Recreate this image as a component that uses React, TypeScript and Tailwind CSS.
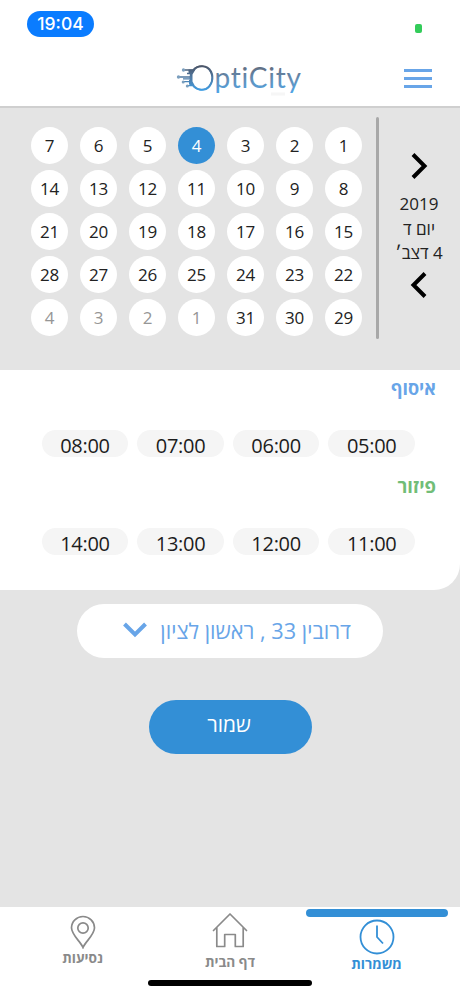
import clsx from "clsx";

interface Day {
  label: number;
  muted?: boolean;
  selected?: boolean;
}

const days: Day[] = [
  ...Array.from({ length: 31 }, (_, i) => ({
    label: i + 1,
    selected: i + 1 === 4,
  })),
  ...[1, 2, 3, 4].map((label) => ({ label, muted: true })),
];

const pickupTimes = ["05:00", "06:00", "07:00", "08:00"];
const dropTimes = ["11:00", "12:00", "13:00", "14:00"];

function Logo() {
  return (
    <svg width="130" height="40" viewBox="0 0 130 40" direction="ltr">
      <defs>
        <linearGradient
          id="ring"
          gradientUnits="userSpaceOnUse"
          x1="0"
          y1="7"
          x2="0"
          y2="33"
        >
          <stop offset="0" stopColor="#4b5263" />
          <stop offset="0.5" stopColor="#4f7ba6" />
          <stop offset="1" stopColor="#3f9fe6" />
        </linearGradient>
        <linearGradient
          id="word"
          gradientUnits="userSpaceOnUse"
          x1="0"
          y1="8"
          x2="0"
          y2="36"
        >
          <stop offset="0" stopColor="#606b7d" />
          <stop offset="0.5" stopColor="#6490b9" />
          <stop offset="1" stopColor="#4ba6ea" />
        </linearGradient>
      </defs>
      <g fill="none" stroke="url(#ring)">
        <ellipse cx="25.200" cy="20" rx="11" ry="11.800" strokeWidth="1.200" />
        <path
          d="M17.500 12C22 7 31 6.500 35 13.500C38 20 36 28 30 31C26 32.500 21 31.500 18 28.500"
          strokeWidth="2"
        />
        <path
          d="M8.500 12H18M3 19H15M8 23.700H15M12 27.700H18M11 15.500H16M7 20.800H15"
          strokeWidth="1.300"
        />
      </g>
      <path
        d="M12.500 11.500H19.500L16.500 16.500V23.500L19.500 29L13 26.500L13 22H14.500V17.500L12.500 14.500Z"
        fill="url(#ring)"
      />
      <g fill="#7b9fbe">
        <circle cx="7.500" cy="12" r="1.700" />
        <circle cx="2.500" cy="19" r="1.700" />
        <circle cx="7.200" cy="23.900" r="1.500" />
        <circle cx="11.300" cy="27.900" r="1.500" />
      </g>
      <text
        x="38.500"
        y="30"
        fontSize="28"
        textLength="86.500"
        fill="url(#word)"
        className="font-['Lato',sans-serif] [font-variant-ligatures:none]"
      >
        ptiCity
      </text>
      <rect x="95" y="34.500" width="14" height="3" fill="#f6f6f6" />
    </svg>
  );
}

function Chevron({ className }: { className?: string }) {
  return (
    <svg
      width="18"
      height="28"
      viewBox="0 0 18 28"
      fill="none"
      stroke="currentColor"
      strokeWidth="4"
      className={className}
    >
      <path d="M3 2.500L14.500 14L3 25.500" />
    </svg>
  );
}

function Header() {
  return (
    <header className="h-[108px] bg-white border-b-2 border-[#cfcfcf]">
      <div className="flex justify-between items-start pt-[11px] pl-[27px] pr-[38px]">
        <span className="w-[67px] h-[26px] rounded-full bg-[#0a7cff] text-white text-[17.5px] leading-[26px] font-medium text-center font-['Inter',sans-serif]">
          19:04
        </span>
        <span className="mt-[13px] w-[7px] h-[9px] rounded-[2px] bg-[#33cc5a]" />
      </div>
      <div className="flex items-center pl-[176px] pr-[28px] mt-[21px] justify-between">
        <Logo />
        <div className="w-7 flex flex-col gap-[5px]">
          <span className="h-[3px] bg-[#68a5e8]" />
          <span className="h-[3px] bg-[#68a5e8]" />
          <span className="h-[3px] bg-[#68a5e8]" />
        </div>
      </div>
    </header>
  );
}

function Calendar() {
  return (
    <section dir="rtl" className="h-[262px] pt-[9px] flex items-start">
      <div className="w-[81px] pr-px pt-[35px] flex flex-col items-center text-[17px] leading-6 text-[#222]">
        <Chevron className="text-black" />
        <span className="mt-[12px]">2019</span>
        <span className="mt-px">יום ד</span>
        <span>4 דצב׳</span>
        <Chevron className="text-black rotate-180 mt-[6px]" />
      </div>
      <div className="w-[3px] h-[222px] rounded-full bg-[#a8a8a8]" />
      <div className="mr-[8px] pt-[10px] grid grid-cols-[repeat(7,49px)] gap-y-[6px] justify-items-center">
        {days.map((day, index) => (
          <span
            key={index}
            className={clsx(
              "size-[37px] rounded-full text-center text-[17px] leading-[37px] tracking-[-0.2px]",
              day.selected ? "bg-[#338fd6] text-white" : "bg-white",
              !day.selected && (day.muted ? "text-[#969696]" : "text-[#222]"),
            )}
          >
            {day.label}
          </span>
        ))}
      </div>
    </section>
  );
}

function TimeRow({ times }: { times: string[] }) {
  return (
    <div className="flex gap-[9px] pr-[45px]">
      {times.map((time) => (
        <span
          key={time}
          className="w-[86.600px] h-[27px] rounded-full bg-[#f5f5f5] text-center text-[20px] leading-[31px] tracking-[-0.3px] text-[#1c1c1c]"
        >
          {time}
        </span>
      ))}
    </div>
  );
}

function Shifts() {
  return (
    <section
      dir="rtl"
      className="h-[220px] bg-white rounded-br-[26px] pt-[6px]"
    >
      <h2 className="pr-6 h-[54px] text-[18px] leading-6 font-bold text-[#68a5e8]">
        איסוף
      </h2>
      <TimeRow times={pickupTimes} />
      <h2 className="pr-6 mt-[17px] h-[54px] text-[18.500px] leading-6 font-bold text-[#71bd77]">
        פיזור
      </h2>
      <TimeRow times={dropTimes} />
    </section>
  );
}

function BottomNav() {
  return (
    <nav className="relative h-[89px] bg-white grid grid-cols-[165px_130px_163px] font-bold text-[13.700px] leading-4 text-[#8a8a8a]">
      <div className="flex flex-col items-center pt-[8px]">
        <svg
          width="26"
          height="34"
          viewBox="0 0 26 34"
          fill="none"
          stroke="currentColor"
          strokeWidth="1.7"
        >
          <path d="M13 32.500C11 27 1.500 20 1.500 12.800A11.500 11.300 0 0 1 24.500 12.800C24.500 20 15 27 13 32.500Z" />
          <circle cx="13" cy="13" r="5.200" />
        </svg>
        <span className="mt-[1px]">נסיעות</span>
      </div>
      <div className="flex flex-col items-center pt-[5px]">
        <svg
          width="36"
          height="37"
          viewBox="0 0 36 37"
          fill="none"
          stroke="currentColor"
          strokeWidth="1.700"
          strokeLinejoin="round"
          strokeLinecap="round"
        >
          <path d="M1.500 18.500L18 2L34.500 18.500M4.800 15.500V34.500H12.700V22.500H23.300V34.500H31.200V15.500" />
        </svg>
        <span className="mt-[5px]">דף הבית</span>
      </div>
      <div className="flex flex-col items-center text-[#338fd6]">
        <span className="mt-[2px] w-[142px] h-[8px] rounded-full bg-[#338fd6]" />
        <svg
          width="36"
          height="36"
          viewBox="0 0 36 36"
          fill="none"
          stroke="currentColor"
          strokeWidth="1.800"
          className="mt-[2px]"
        >
          <circle cx="18" cy="18" r="16.500" />
          <path d="M18 6.500V18L24 24.500" />
        </svg>
        <span className="mt-[1px]">משמרות</span>
      </div>
      <span className="absolute left-[148px] top-[73px] w-[164px] h-[6px] rounded-full bg-black" />
    </nav>
  );
}

export default function App() {
  return (
    <div className="w-[460px] h-[996px] bg-[#e4e4e4] flex flex-col overflow-hidden font-['Open_Sans','Noto_Sans',sans-serif]">
      <Header />
      <Calendar />
      <Shifts />
      <main className="flex-1 flex flex-col items-center pt-[14px]">
        <button
          dir="rtl"
          className="w-[306px] h-[54px] rounded-full bg-white flex items-center pr-[32px] text-[21.700px] text-[#68a5e8]"
        >
          <span className="pt-px">דרובין 33 , ראשון לציון</span>
          <svg
            width="26"
            height="18"
            viewBox="0 0 26 18"
            fill="none"
            stroke="currentColor"
            strokeWidth="4"
            className="mr-[12px] -mt-[2px]"
          >
            <path d="M2.500 3L13 13.500L23.500 3" />
          </svg>
        </button>
        <button className="mt-[42px] w-[163px] h-[54px] rounded-full bg-[#338fd6] text-white text-[21px] pb-[5px] pr-[2px]">
          שמור
        </button>
      </main>
      <BottomNav />
    </div>
  );
}
